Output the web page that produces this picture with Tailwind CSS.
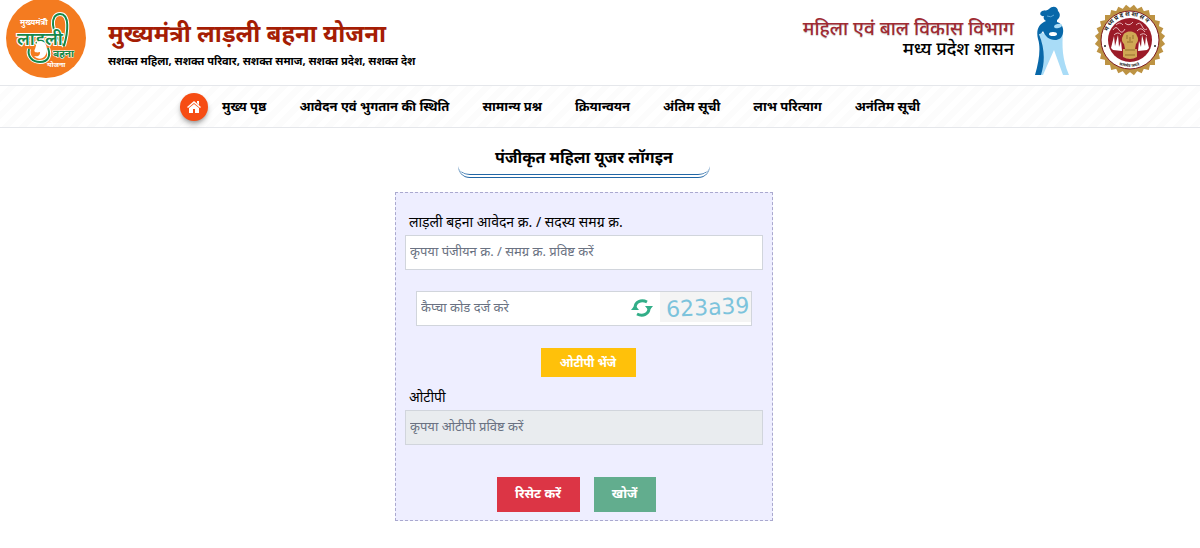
<!DOCTYPE html>
<html lang="hi">

<head>
  <meta charset="UTF-8">
  <meta name="viewport" content="width=device-width, initial-scale=1.0">
  <title>मुख्यमंत्री लाड़ली बहना योजना</title>
  <script src="https://cdn.jsdelivr.net/npm/@tailwindcss/browser@4"></script>
</head>

<body class="min-h-screen bg-white font-['Noto_Sans','Noto_Sans_Devanagari',sans-serif] text-black">

  <!-- Header -->
  <header class="flex h-[85px] items-start justify-between pl-1 pr-[34px]">
    <div class="flex items-start gap-4">
      <svg class="h-20 w-[88px]" viewBox="0 0 88 80" role="img" aria-label="लाड़ली बहना">
        <circle cx="42" cy="38" r="40" fill="#f47b20" />
        <path d="M60 46C46 32 46 14 56 14c10 0 8 18 4 32" fill="none" stroke="#fff" stroke-width="4" />
        <path d="M60 46C46 32 46 14 56 14c10 0 8 18 4 32" fill="none" stroke="#16884a" stroke-width="2" />
        <path d="M25 49c-2 8 4 13 11 13 8 0 11-6 8-14" fill="none" stroke="#fff" stroke-width="4" />
        <path d="M25 49c-2 8 4 13 11 13 8 0 11-6 8-14" fill="none" stroke="#16884a" stroke-width="2" />
        <text x="16" y="25" font-size="8" font-weight="700" fill="#fff">मुख्यमंत्री</text>
        <text x="13" y="45" font-size="18" font-weight="600" fill="#16884a" stroke="#fff" stroke-width="2" paint-order="stroke">लाड़ली</text>
        <path d="M33 42c6-3 10 2 10 8 0 7-7 12-13 6 5 1 6-1 6-4-4 1-7 0-5-3z" fill="#fff" />
        <text x="49" y="57" font-size="10" font-weight="700" fill="#16884a" stroke="#fff" stroke-width="1" paint-order="stroke">बहना</text>
        <text x="43" y="67" font-size="7" font-weight="700" fill="#fff">योजना</text>
      </svg>
      <div class="pt-[17px]">
        <h1 class="text-2xl leading-8 font-bold text-[#a51d04]">मुख्यमंत्री लाड़ली बहना योजना</h1>
        <p class="text-[11px] leading-6 font-bold">सशक्त महिला, सशक्त परिवार, सशक्त समाज, सशक्त प्रदेश, सशक्त देश</p>
      </div>
    </div>
    <div class="flex items-start gap-5">
      <div class="pt-4 text-right">
        <p class="text-[19px] leading-6 font-medium text-[#a02a32] text-shadow-xs">महिला एवं बाल विकास विभाग</p>
        <p class="text-lg leading-4 font-medium italic">मध्य प्रदेश शासन</p>
      </div>
      <svg class="mt-1.5 h-[70px] w-9" viewBox="0 0 36 70" role="img" aria-label="महिला एवं बाल विकास">
        <path d="M4 25C10 38 9 53 5 69h4l11-25 9 25h6C28 52 28 41 29 25L22 33z" fill="#a9dcf7" />
        <path d="M12 15c-2-1-3-3-2-5-4 1-5-3-2-5 3-1 5 0 7-2 4-4 9-2 9 2 3 3 2 7-1 9v2c4 1 7 5 6 11-1 5-4 7-8 7-6 0-10-4-12-9-2 3-3 3-4 3 6 15 6 28 2 41H1C5 55 7 42 4 33 2 25 4 18 12 15z" fill="#0868a9" />
        <ellipse cx="24" cy="20" rx="4" ry="2" fill="#a9dcf7" transform="rotate(-15 24 20)" />
        <ellipse cx="19" cy="28" rx="4" ry="2" fill="#fff" />
        <path d="M13 10q4 2 7-1" fill="none" stroke="#5ba8d8" stroke-width="1" />
      </svg>
      <svg class="ml-1 mt-1 h-[72px] w-[72px]" viewBox="0 0 72 72" role="img" aria-label="मध्य प्रदेश शासन">
        <defs>
          <rect id="tooth" x="11" y="11" width="50" height="50" />
          <path id="arc-top" d="M12 36a24 24 0 0 1 48 0" />
          <path id="arc-bottom" d="M9 36a27 27 0 0 0 54 0" />
        </defs>
        <g fill="#bd9343">
          <use href="#tooth" />
          <use href="#tooth" transform="rotate(12.857 36 36)" />
          <use href="#tooth" transform="rotate(25.714 36 36)" />
          <use href="#tooth" transform="rotate(38.571 36 36)" />
          <use href="#tooth" transform="rotate(51.429 36 36)" />
          <use href="#tooth" transform="rotate(64.286 36 36)" />
          <use href="#tooth" transform="rotate(77.143 36 36)" />
        </g>
        <circle cx="36" cy="36" r="29" fill="#fff" stroke="#7d1c22" stroke-width="1" />
        <circle cx="36" cy="36" r="22" fill="#9b1b28" />
        <text font-size="6" font-weight="700" fill="#222"><textPath href="#arc-top" startOffset="9">म ध्य प्र दे श  शा स न</textPath></text>
        <text font-size="4" font-weight="700" fill="#222"><textPath href="#arc-bottom" startOffset="31">सत्यमेव जयते</textPath></text>
        <g fill="none" stroke="#e7b6ba" stroke-width="1">
          <path d="M19 26q3-5 6 0t6-1M22 21q4-4 7 0M31 19q4 4 8-1M42 21q4-4 6 1t5 3M43 27q4-5 8 1M20 31q4-4 7 0M46 31q4-3 7 1" />
        </g>
        <path d="M17 44l3-12 1 10 3-11 1 12 2-6 1 10-9-1zM55 44l-3-12-1 10-3-11-1 12-2-6-1 10 9-1z" fill="#fff" />
        <path d="M29 32c1-6 13-6 14 0 2 3 1 6-1 8l-1 5h2v8q-7 4-14 0v-8h2l-1-5c-2-2-3-5-1-8z" fill="#d0a855" />
        <path d="M33 31v4M39 31v4M36 33v4M33 38h6M31 46h10M31 51h10" fill="none" stroke="#95702f" stroke-width="1" />
        <circle cx="11" cy="42" r="1" fill="#222" />
        <circle cx="61" cy="42" r="1" fill="#222" />
      </svg>
    </div>
  </header>

  <!-- Menu -->
  <nav class="flex h-[43px] items-center border-y border-gray-200 bg-[repeating-linear-gradient(135deg,#ffffff_0px,#ffffff_6px,#fcfcfc_6px,#fcfcfc_12px)] pl-[180px] text-[13px] font-bold whitespace-nowrap">
    <a href="#" class="mr-3.5 flex size-7 items-center justify-center rounded-full bg-[#f64c13] shadow-md shadow-black/30" aria-label="होम">
      <svg class="size-4" viewBox="0 0 16 16" fill="#fff">
        <path d="M8 2l7 6-1 1-6-5-6 5-1-1zM11 2h2v4l-2-2zM3 9l5-4 5 4v5H9v-4H7v4H3z" />
      </svg>
    </a>
    <div class="flex gap-[33px]">
      <a href="#">मुख्य पृष्ठ</a>
      <a href="#">आवेदन एवं भुगतान की स्थिति</a>
      <a href="#">सामान्य प्रश्न</a>
      <a href="#">क्रियान्वयन</a>
      <a href="#">अंतिम सूची</a>
      <a href="#">लाभ परित्याग</a>
      <a href="#">अनंतिम सूची</a>
    </div>
  </nav>

  <!-- Login -->
  <main class="flex flex-col items-center pr-8 pt-4">
    <h2 class="mb-3.5 h-[34px] w-[252px] rounded-b-xl border-b-4 border-double border-[#2166a5] text-center text-base leading-[26px] font-bold">पंजीकृत महिला यूजर लॉगइन</h2>

    <form class="w-full max-w-[378px] border border-dashed border-[#aaa9cf] bg-[#eeeeff] px-[9px] pb-2 pt-4">
      <label for="samagra" class="block pl-1 text-sm leading-[26px]">लाड़ली बहना आवेदन क्र. / सदस्य समग्र क्र.</label>
      <input id="samagra" type="text" class="block h-[35px] w-full border border-gray-300 bg-white px-1 pb-1 text-[13px] placeholder:text-gray-500" placeholder="कृपया पंजीयन क्र. / समग्र क्र. प्रविष्ट करें">

      <div class="mx-[11px] mt-[21px] flex h-[35px] border border-gray-300 bg-white">
        <input type="text" aria-label="कैप्चा कोड" class="min-w-0 flex-1 px-1 pb-0.5 text-[13px] placeholder:text-gray-500" placeholder="कैप्चा कोड दर्ज करे">
        <button type="button" class="mr-1.5 flex w-6 items-center justify-center pb-0.5" aria-label="नया कैप्चा">
          <svg class="size-[22px]" viewBox="0 0 22 22" fill="none" stroke="#32ae88" stroke-width="3">
            <path d="M4 11C4 5 10 2 16 5M18 11c0 6-6 9-12 6" />
            <path d="M0 13l4-5 4 5zM14 9l4 5 4-5z" fill="#32ae88" stroke="none" />
          </svg>
        </button>
        <div class="h-[30px] w-[91px] bg-[#f4f4f4]">
          <svg class="size-full overflow-visible" viewBox="0 0 91 30">
            <text x="6" y="23" transform="rotate(-3 46 15)" font-family="DejaVu Sans, sans-serif" font-size="22" fill="#7cc3dc">623a39</text>
          </svg>
        </div>
      </div>

      <div class="mt-[22px] flex justify-center pl-2">
        <button type="button" class="h-[29px] w-[95px] bg-[#ffc10a] text-xs font-bold text-white">ओटीपी भेंजे</button>
      </div>

      <label for="otp" class="mt-[7px] block pl-1 text-sm leading-[26px]">ओटीपी</label>
      <input id="otp" type="text" disabled class="block h-[35px] w-full border border-gray-300 bg-[#e9ecef] px-1 pb-1 text-[13px] placeholder:text-gray-500" placeholder="कृपया ओटीपी प्रविष्ट करें">

      <div class="mt-8 flex justify-center gap-3.5 pr-4 text-[13px] font-bold text-white">
        <button type="reset" class="h-[35px] w-[83px] bg-[#dc3545] pb-0.5">रिसेट करें</button>
        <button type="submit" class="h-[35px] w-[62px] bg-[#62ad8e] pb-0.5">खोजें</button>
      </div>
    </form>
  </main>

</body>

</html>
